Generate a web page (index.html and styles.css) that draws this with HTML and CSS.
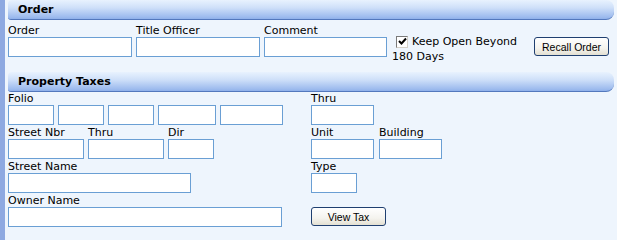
FILE: index.html
```html
<!DOCTYPE html>
<html>
<head>
    <meta charset="utf-8" />
    <title>Order</title>
    <link rel="stylesheet" href="styles.css">
</head>
<body>
    <div class="page">
        <div class="rail"></div>
        <div class="main">
            <div class="bar">Order</div>
            <div class="section order">
                <div class="row">
                    <div class="field"><label>Order</label><input class="w124" type="text"></div>
                    <div class="field"><label>Title Officer</label><input class="w124" type="text"></div>
                    <div class="field"><label>Comment</label><input class="w123" type="text"></div>
                    <div class="keep">
                        <div class="keepLine"><span class="check"><svg width="9" height="9" viewBox="0 0 9 9"><path d="M1 4 L3.5 6.5 L8 1.5" fill="none" stroke="#000" stroke-width="2"/></svg></span>Keep Open Beyond</div>
                        <div>180 Days</div>
                    </div>
                    <button class="btn recall">Recall Order</button>
                </div>
            </div>

            <div class="bar">Property Taxes</div>
            <div class="section taxes">
                <div class="row">
                    <div class="left">
                        <div class="field">
                            <label>Folio</label>
                            <div class="inputs">
                                <input class="w46" type="text">
                                <input class="w46" type="text">
                                <input class="w46" type="text">
                                <input class="w58" type="text">
                                <input class="w63" type="text">
                            </div>
                        </div>
                    </div>
                    <div class="right">
                        <div class="field"><label>Thru</label><input class="w63" type="text"></div>
                    </div>
                </div>
                <div class="row">
                    <div class="left">
                        <div class="field"><label>Street Nbr</label><input class="w76" type="text"></div>
                        <div class="field"><label>Thru</label><input class="w76" type="text"></div>
                        <div class="field"><label>Dir</label><input class="w46" type="text"></div>
                    </div>
                    <div class="right">
                        <div class="field"><label>Unit</label><input class="w63" type="text"></div>
                        <div class="field"><label>Building</label><input class="w63" type="text"></div>
                    </div>
                </div>
                <div class="row">
                    <div class="left">
                        <div class="field"><label>Street Name</label><input class="w183" type="text"></div>
                    </div>
                    <div class="right">
                        <div class="field"><label>Type</label><input class="w46" type="text"></div>
                    </div>
                </div>
                <div class="row">
                    <div class="left">
                        <div class="field"><label>Owner Name</label><input class="w274" type="text"></div>
                    </div>
                    <div class="right">
                        <button class="btn viewtax">View Tax</button>
                    </div>
                </div>
            </div>
        </div>
    </div>
</body>
</html>
```

FILE: styles.css
```css
body {
    margin: 0;
    background-color: #eef5fd;
    font-family: "DejaVu Sans", Verdana, sans-serif;
    font-size: 11px;
    color: #000;
}

.page {
    display: flex;
    height: 240px;
}

.rail {
    width: 5px;
    background-color: #8ea9e1;
}

.main {
    flex: 1;
    padding-left: 3px;
    padding-right: 3px;
}

.bar {
    height: 19px;
    line-height: 19px;
    padding-left: 10px;
    font-weight: bold;
    color: #000;
    border-bottom: 1px solid #5378bd;
    border-radius: 4px 8px 8px 3px;
    background-image: linear-gradient(to bottom, #e8f2fe, #cfe0f9 40%, #9dbbee 90%, #8fb0ea);
}

.order {
    padding-top: 4px;
    height: 48px;
}

.row {
    display: flex;
    align-items: flex-start;
    gap: 4px;
    margin-bottom: 1px;
}

.taxes .row {
    gap: 0;
}

.field {
    display: flex;
    flex-direction: column;
}

label {
    height: 13px;
    line-height: 13px;
    white-space: nowrap;
}

input {
    box-sizing: border-box;
    height: 20px;
    margin: 0;
    border: 1px solid #6a9fd4;
    background-color: white;
    padding: 0 2px;
    font-family: inherit;
    font-size: 11px;
}

.inputs {
    display: flex;
    gap: 4px;
}

.w46 { width: 46px; }
.w58 { width: 58px; }
.w63 { width: 63px; }
.w76 { width: 76px; }
.w123 { width: 123px; }
.w124 { width: 124px; }
.w183 { width: 183px; }
.w274 { width: 274px; }

.keep {
    width: 138px;
    margin-left: 1px;
    margin-top: 10px;
    line-height: 15px;
    white-space: nowrap;
}

.keepLine {
    display: flex;
    align-items: center;
}

.check {
    box-sizing: border-box;
    width: 12px;
    height: 12px;
    margin: 0 4px 0 4px;
    border: 1px solid #7a7a7a;
    border-right-color: #d4d0c8;
    border-bottom-color: #d4d0c8;
    background-color: white;
    display: flex;
    align-items: center;
    justify-content: center;
}

.btn {
    box-sizing: border-box;
    width: 75px;
    height: 19px;
    padding: 0;
    border: 1px solid #1f3f70;
    border-radius: 3px;
    background-image: linear-gradient(to bottom, #ffffff, #f4f3ee 60%, #e3e0d2);
    font-family: "Liberation Sans", Arial, sans-serif;
    font-size: 10.5px;
    color: #000;
}

.recall {
    margin-top: 13px;
}

.left {
    width: 303px;
    display: flex;
    gap: 4px;
}

.right {
    display: flex;
    gap: 5px;
}

.viewtax {
    margin-top: 13px;
}
```
